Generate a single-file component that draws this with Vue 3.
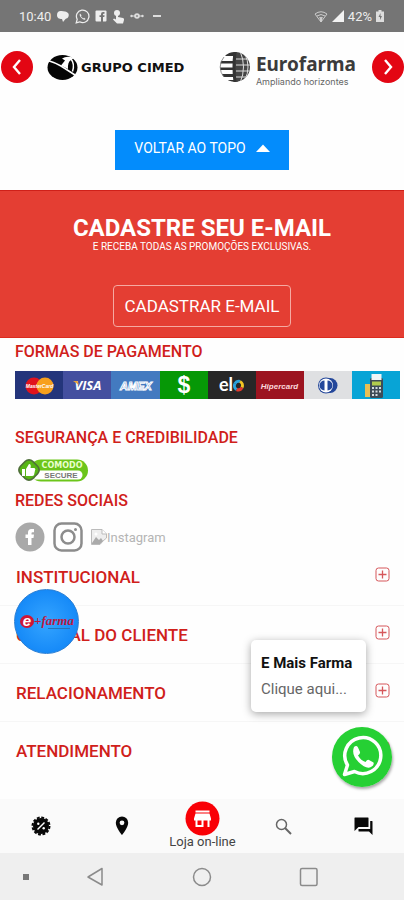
<script setup>
import { ref } from 'vue'

const sections = ['INSTITUCIONAL', 'CENTRAL DO CLIENTE', 'RELACIONAMENTO', 'ATENDIMENTO']
const open = ref('')
const toTop = () => window.scrollTo({ top: 0, behavior: 'smooth' })
</script>

<template>
  <div class="page">
    <header class="status">
      <div class="status-group">
        <span class="clock">10:40</span>
        <svg width="14" height="14" viewBox="0 0 14 14" fill="#eee"><path d="M1 6C1 3 3 1.500 5.500 2L9 2.500C12 3 13.500 5 12.500 7.500C12 9 10.500 9.500 9.500 10L7 13L6 10C3 10 1 9 1 6Z" /></svg>
        <svg width="15" height="15" viewBox="0 0 24 24" fill="none" stroke="#eee" stroke-width="2"><path d="M2 22l1.500-5.500A10 10 0 1 1 7.500 20.500Z" /><path d="M8 7c-1.500 2 0 5 2.500 7.500s5 3.500 6.500 1.500l-2.500-2-1.500 1-3.500-3.500 1-1.500Z" fill="#eee" stroke="none" /></svg>
        <svg width="12" height="12" viewBox="0 0 12 12"><rect x="0.500" y="0.500" width="11" height="11" rx="1" fill="#eee" /><path d="M6 12V7H4.500V5.200H6V4Q6 2 8 2H9.500V3.800H8.500Q8 3.800 8 4.300V5.200H9.600L9.300 7H8V12Z" fill="#757575" /></svg>
        <svg width="13" height="15" viewBox="0 0 13 15" fill="#eee"><circle cx="5" cy="4" r="3" /><path d="M4 4a1 1 0 0 1 2 0v4l5 1q1.500.500 1 2l-1 3.500H5L1 10.500l1-1 2 1Z" /></svg>
        <svg width="14" height="8" viewBox="0 0 14 8" fill="#ddd"><circle cx="7" cy="4" r="2.800" /><circle cx="1.500" cy="4" r="1.200" /><circle cx="12.500" cy="4" r="1.200" /><path d="M1 3.500h12v1H1Z" /><circle cx="7" cy="4" r="1" fill="#888" /></svg>
        <span class="dash"></span>
      </div>
      <div class="status-group right">
        <svg width="14" height="13" viewBox="0 0 14 13" fill="none" stroke="#ccc"><path d="M1 4Q7-.500 13 4L7 12Z" /><path d="M3 6q4-3 8 0M5 8q2-1.500 4 0" /><path d="M7 8v4" stroke-width="2" /></svg>
        <svg width="12" height="12" viewBox="0 0 12 12" fill="#f2f2f2"><path d="M12 0V12H0Z" /></svg>
        <span>42%</span>
        <svg width="8" height="12" viewBox="0 0 8 12"><path d="M2.500 0h3v1.500H8V12H0V1.500h2.500Z" fill="#ddd" /><path d="M4.500 3L2.500 7H4v3l2-4H4.500Z" fill="#757575" /></svg>
      </div>
    </header>

    <main>
      <section class="brands" aria-label="Marcas">
        <button class="arrow" aria-label="Anterior">
          <svg width="32" height="32" viewBox="0 0 32 32" fill="none" stroke="#fff" stroke-width="2.400"><path d="M19 9l-6 7 6 7" /></svg>
        </button>
        <div class="logos">
          <a class="cimed" href="#" aria-label="Grupo Cimed">
            <svg width="31" height="27" viewBox="0 0 31 27">
              <ellipse cx="15.500" cy="13.500" rx="15" ry="12.500" fill="#050505" />
              <path d="M1 6.500Q9 9 14 12L28 21" fill="none" stroke="#fff" stroke-width="1.600" />
              <path d="M14 11.500L18 6.500 15 4.500Q20 1.500 27 4L24 6Q20.500 8 21 15Z" fill="#fff" />
              <path d="M24 5q4 5 1.500 12.500" fill="none" stroke="#fff" stroke-width="1.500" />
            </svg>
            <span>GRUPO CIMED</span>
          </a>
          <a class="euro" href="#" aria-label="Eurofarma">
            <svg width="32" height="32" viewBox="0 0 32 32">
              <defs><clipPath id="globe"><circle cx="16" cy="16" r="15" /></clipPath></defs>
              <g clip-path="url(#globe)">
                <path d="M0 1h18v4H0ZM0 10h18v2.500H0ZM0 16.500h18v2.500H0ZM0 23h18v3H0ZM4 29h15v3H4Z" fill="#333" />
                <path d="M16 0h16v32H16Z" fill="#454545" />
                <path d="M17 8h15M17 14h15M17 20h15M17 26h15M21 0q7 16 0 32M26 3q6 13 0 26" fill="none" stroke="#ddd" stroke-width="1" />
                <path d="M16 1q-2 15 0 30" fill="none" stroke="#333" stroke-width="3" />
              </g>
              <path d="M5 6A15 15 0 0 0 5 26" fill="none" stroke="#777" stroke-width="0.800" />
            </svg>
            <span class="euro-words"><b>Eurofarma</b><small>Ampliando horizontes</small></span>
          </a>
        </div>
        <button class="arrow" aria-label="Próximo">
          <svg width="32" height="32" viewBox="0 0 32 32" fill="none" stroke="#fff" stroke-width="2.400"><path d="M13 9l6 7-6 7" /></svg>
        </button>
      </section>

      <button class="to-top" @click="toTop">
        <span>VOLTAR AO TOPO</span>
        <svg width="14" height="8" viewBox="0 0 14 8"><path d="M7 0.500L14 8H0Z" fill="#fff" /></svg>
      </button>

      <section class="newsletter">
        <h2>CADASTRE SEU E-MAIL</h2>
        <p>E RECEBA TODAS AS PROMOÇÕES EXCLUSIVAS.</p>
        <button>CADASTRAR E-MAIL</button>
      </section>

      <section class="info">
        <h3>FORMAS DE PAGAMENTO</h3>
        <svg class="cards" viewBox="0 0 385 28" role="img" aria-label="Formas de pagamento">
          <rect width="48" height="28" fill="#24357b" />
          <rect x="48" width="48" height="28" fill="#444f9f" />
          <rect x="96" width="49" height="28" fill="#437ac0" />
          <rect x="145" width="48" height="28" fill="#069806" />
          <rect x="193" width="48" height="28" fill="#272727" />
          <rect x="241" width="48" height="28" fill="#9c1420" />
          <rect x="289" width="48" height="28" fill="#dfe0e2" />
          <rect x="337" width="48" height="28" fill="#08a4d6" />
          <circle cx="19" cy="15" r="8.500" fill="#e1131d" /><circle cx="30" cy="15" r="8.500" fill="#f7a01d" />
          <text x="24.500" y="17" class="master">MasterCard</text>
          <text x="73" y="19" class="visa">VISA</text><path d="M58 10h4.500l1.500 4Z" fill="#e8a33d" />
          <text x="121" y="19" class="amex">AMEX</text>
          <text x="169" y="22" class="cash">$</text>
          <text x="211" y="20" class="elo">el</text>
          <g fill="none" stroke-width="3"><path d="M220 12.500a4.500 4.500 0 0 1 5-2" stroke="#2aa4df" /><path d="M225 10.500a4.500 4.500 0 0 1 2 6" stroke="#f3c623" /><path d="M227 16.500a4.500 4.500 0 0 1-5.500 2" stroke="#e33b2e" /><path d="M221.500 18.500a4.500 4.500 0 0 1-1.500-6" stroke="#2aa4df" /></g>
          <text x="264.500" y="18" class="hiper">Hipercard</text>
          <circle cx="315" cy="14.500" r="7.500" fill="#24479a" /><circle cx="311" cy="14.500" r="8" fill="#24479a" /><circle cx="311" cy="14.500" r="7" fill="#fff" /><path d="M309.500 9.500a5 5 0 0 0 0 10ZM312.500 9.500a5 5 0 0 1 0 10Z" fill="#24479a" />
          <rect x="350" y="13" width="10" height="13" fill="#e9bf54" /><rect x="355" y="7" width="13" height="20" rx="1.500" fill="#3e4b57" /><path d="M356.500 3h10v6h-10Z" fill="#eef4f6" /><rect x="357" y="10.500" width="9" height="4" fill="#b2cc4d" />
          <g fill="#d5dce1"><path d="M357 16h2v2h-2ZM360.500 16h2v2h-2ZM364 16h2v2h-2ZM357 19.500h2v2h-2ZM360.500 19.500h2v2h-2ZM364 19.500h2v2h-2ZM357 23h2v2h-2ZM360.500 23h2v2h-2Z" /></g>
        </svg>

        <h3 class="security">SEGURANÇA E CREDIBILIDADE</h3>
        <svg class="seal" width="72" height="25" viewBox="0 0 72 25" role="img" aria-label="Comodo Secure">
          <rect x="13" y="1.500" width="58" height="22" rx="11" fill="#6cc51a" />
          <path d="M19 12.500H61a4.500 4.500 0 0 1 0 9H17Z" fill="#fff" />
          <rect x="2.500" y="2.500" width="19" height="19" rx="6" transform="rotate(45 12 12)" fill="#4f6f3a" />
          <rect x="4" y="4" width="16" height="16" rx="5" transform="rotate(45 12 12)" fill="#57b516" />
          <path d="M5 11h3v7H5ZM9 11l3-5q2.500 0 1.500 4h4q1.500 1 .500 2.500l-1 4.500q-.500 1-2 1H9Z" fill="#fff" />
          <text x="45" y="10" class="comodo">COMODO</text>
          <text x="44" y="20" class="secure">SECURE</text>
        </svg>

        <h3 class="social-title">REDES SOCIAIS</h3>
        <div class="social">
          <a href="#" aria-label="Facebook"><svg width="30" height="30" viewBox="0 0 30 30"><circle cx="15" cy="15" r="14.500" fill="#a9a9a9" /><path d="M13 23V16H10.500V12.500H13V10.500Q13 7 16.500 7H19V10.300H17.500Q16.500 10.300 16.500 11.300V12.500H19L18.500 16H16.500V23Z" fill="#fff" /></svg></a>
          <a href="#" aria-label="Instagram"><svg width="30" height="30" viewBox="0 0 30 30" fill="none" stroke="#8c8c8c" stroke-width="2.500"><rect x="1.500" y="1.500" width="27" height="27" rx="7" /><circle cx="15" cy="15" r="6.500" /><circle cx="22.500" cy="7.500" r="1.500" fill="#8c8c8c" stroke="none" /></svg></a>
          <a href="#" class="missing">
            <svg width="16" height="16" viewBox="0 0 16 16"><path d="M.500.500H11L15.500 5V9L12 12 9 15.500H.500Z" fill="#eee" stroke="#bbb" /><path d="M11 .500V5h4.500" fill="#fff" stroke="#bbb" /><path d="M1 14l4-6 3 3 2-2 2 3-3 3H1Z" fill="#aaa" /><circle cx="5" cy="5" r="1.500" fill="#fff" /></svg><span>Instagram</span>
          </a>
        </div>
      </section>

      <nav class="sections" aria-label="Links do rodapé">
        <button v-for="name in sections" :key="name" :aria-expanded="open === name" @click="open = open === name ? '' : name">
          <span>{{ name }}</span>
          <svg width="15" height="15" viewBox="0 0 15 15" fill="none" stroke="#d6575b"><rect x="1" y="1" width="13" height="13" rx="2.500" /><path d="M3.500 7.500h8M7.500 3.500v8" stroke-width="1.300" /></svg>
        </button>
      </nav>
    </main>

    <footer>
      <nav class="tabs" aria-label="Principal">
        <a href="#" aria-label="Ofertas"><svg width="20" height="20" viewBox="0 0 20 20"><circle cx="10" cy="10" r="8" fill="#080808" /><circle cx="10" cy="10" r="8.500" fill="none" stroke="#080808" stroke-width="2" stroke-dasharray="2.850 1.600" /><path d="M6.500 13.500L13.500 6.500" stroke="#fff" stroke-width="1.400" /><circle cx="7.300" cy="7.700" r="1.200" fill="#fff" /><circle cx="12.700" cy="12.300" r="1.200" fill="#fff" /></svg></a>
        <a href="#" aria-label="Lojas"><svg width="14" height="20" viewBox="0 0 14 20"><path d="M7 .500a6.200 6.200 0 0 0-6.200 6.200C.800 11.500 7 19 7 19s6.200-7.500 6.200-12.300A6.200 6.200 0 0 0 7 .500Zm0 8.700a2.400 2.400 0 1 1 0-4.800 2.400 2.400 0 0 1 0 4.800Z" fill="#080808" /></svg></a>
        <a href="#" class="store">
          <svg width="35" height="35" viewBox="0 0 35 35"><circle cx="17.500" cy="17.500" r="17" fill="#f90006" /><path d="M10.500 9.500h14v2h-14ZM10.500 12.500h14l1.500 5v2h-1.500V26h-2v-6.500h-4V26h-8v-6.500H9v-2ZM12.500 19.500V24h4v-4.500Z" fill="#fff" fill-rule="evenodd" /></svg>
          <span>Loja on-line</span>
        </a>
        <a href="#" aria-label="Buscar"><svg width="17" height="17" viewBox="0 0 17 17" fill="none" stroke="#666"><circle cx="6.500" cy="6.500" r="5" stroke-width="1.500" /><path d="M10 10l6 6" stroke-width="2" /></svg></a>
        <a href="#" aria-label="Mensagens"><svg width="19" height="19" viewBox="0 0 19 19" fill="#080808"><path d="M.500 1q0-.500.500-.500h13q.500 0 .500.500v8.500q0 .500-.500.500H4.500l-4 4Z" /><path d="M16.200 4h1.800q.500 0 .500.500V18l-3.500-3.500H5q-.500 0-.500-.500v-2H16.200Z" /></svg></a>
      </nav>
      <div class="system">
        <span class="dot"></span>
        <button aria-label="Voltar"><svg width="18" height="20" viewBox="0 0 18 20" fill="none" stroke="#8b8b8b" stroke-width="1.500"><path d="M16 1.500V18L2 10Z" stroke-linejoin="round" /></svg></button>
        <button aria-label="Início"><svg width="20" height="20" viewBox="0 0 20 20" fill="none" stroke="#8b8b8b" stroke-width="1.500"><circle cx="10" cy="10" r="8.500" /></svg></button>
        <button aria-label="Recentes"><svg width="20" height="20" viewBox="0 0 20 20" fill="none" stroke="#8b8b8b" stroke-width="1.500"><rect x="1.500" y="1.500" width="16.500" height="17" rx="1.500" /></svg></button>
      </div>
    </footer>

    <a class="efarma" href="#" aria-label="e+farma">
      <svg width="58" height="20" viewBox="0 0 58 20">
        <ellipse cx="9" cy="9.500" rx="7" ry="6.500" fill="#cf1535" />
        <text x="9" y="14" class="e-mark">e</text>
        <text x="36" y="13" class="e-name">+farma</text>
        <path d="M30 16.500h22" stroke="#2a6fb5" stroke-width="1" />
      </svg>
    </a>
    <div class="popup"><b>E Mais Farma</b><span>Clique aqui...</span></div>
    <a class="whatsapp" href="#" aria-label="WhatsApp">
      <svg width="60" height="60" viewBox="0 0 60 60">
        <circle cx="30" cy="30" r="30" fill="#26d034" />
        <path d="M12.500 47.500L15.500 38A18 18 0 1 1 22.500 44.500Z" fill="none" stroke="#fff" stroke-width="3.500" stroke-linejoin="round" />
        <path d="M22 20q2.500-2 4 .500l2 4.500q.500 1.500-2 3.500 3 5 7.500 6.500 2-3 3.500-2l4.500 2.500q1 3-2.500 4.500Q34 42.500 26.500 35T22 20Z" fill="#fff" />
      </svg>
    </a>
  </div>
</template>

<style>
body { margin: 0; background: #fff; }
</style>

<style scoped>
* { box-sizing: border-box; }
.page { position: relative; min-height: 100vh; display: flex; flex-direction: column; font-family: Roboto, "Liberation Sans", sans-serif; background: #fefefe; }
button { font: inherit; border: 0; margin: 0; padding: 0; background: none; color: inherit; cursor: pointer; }
a { color: inherit; text-decoration: none; }
svg { display: block; flex: none; }
h2, h3, p { margin: 0; }
main { flex: 1; }

.status { height: 32px; padding: 0 20px 0 19px; display: flex; justify-content: space-between; align-items: center; background: #757575; color: #eee; font-size: 13px; }
.status-group { display: flex; align-items: center; gap: 5px; }
.status-group.right { gap: 4px; }
.dash { width: 8px; height: 2px; margin-left: 4px; background: #ddd; }

.brands { height: 72px; padding: 0 0 2px 1px; display: flex; align-items: center; }
.logos { flex: 1; padding: 0 16px 0 14px; display: flex; align-items: center; justify-content: space-between; }
.arrow { width: 32px; height: 32px; border-radius: 50%; background: #e30613; }
.cimed { display: flex; align-items: center; gap: 3px; color: #111; font: bold 13px "DejaVu Sans", sans-serif; }
.euro { height: 32px; display: flex; align-items: center; gap: 5px; color: #3b3b3b; }
.euro-words { display: flex; flex-direction: column; padding-top: 6px; }
.euro-words b { font: bold 19px/24px "Noto Sans", sans-serif; }
.euro-words small { font: 9px/12px Inter, sans-serif; color: #666; }

.to-top { display: flex; align-items: center; gap: 10px; height: 40px; margin: 26px auto 20px; padding: 0 19px 4px; background: #038cfc; color: #fff; font-size: 14px; }

.newsletter { height: 148px; padding-top: 24px; display: flex; flex-direction: column; align-items: center; background: #e43e33; border-top: 1px solid #cf2019; border-bottom: 1px solid #dc2b1e; color: #fff; }
.newsletter h2 { font-size: 24px; line-height: 26px; font-weight: 700; }
.newsletter p { font-size: 10px; line-height: 12px; font-weight: 400; }
.newsletter button { height: 42px; margin-top: 32px; padding: 0 11px; border: 1px solid #f5aaa2; border-radius: 4px; font-size: 17px; }

.info { padding: 4px 4px 0 15px; }
.info h3 { color: #d0201a; font-size: 16px; line-height: 20px; font-weight: 500; }
.cards { width: 100%; margin-top: 9px; }
.cards text, .seal text, .efarma text { text-anchor: middle; }
.master { font: bold italic 5px "Liberation Sans"; fill: #fff; }
.visa { font: italic bold 13px "Open Sans"; fill: #fff; }
.amex { font: italic bold 11px "Liberation Sans"; fill: #437ac0; stroke: #fff; stroke-width: 1px; }
.cash { font: bold 23px "Liberation Sans"; fill: #fff; }
.elo { font: bold 18px Lato; fill: #fff; }
.hiper { font: italic bold 8px "Liberation Sans"; fill: #fbd8dc; }
.info .security { margin-top: 29px; }
.seal { margin: 10px 0 0 2px; }
.comodo { font: bold 8px "DejaVu Sans"; fill: #e9ffce; }
.secure { font: bold 8px "Liberation Sans"; fill: #777; }
.info .social-title { margin-top: 8px; }
.social { display: flex; align-items: center; gap: 8px; margin-top: 11px; height: 30px; }
.missing { display: flex; align-items: center; color: #b5b5b5; font-size: 13px; }

.sections { display: flex; flex-direction: column; margin-top: -4px; }
.sections button { height: 58px; padding: 0 14px 0 16px; display: flex; align-items: center; justify-content: space-between; border-bottom: 1px solid #f6f6f6; color: #d0201a; font-size: 17px; font-weight: 500; }
.sections button:last-child { border-bottom: 0; }
.sections svg { margin-bottom: 5px; }

.tabs { display: grid; grid-template-columns: repeat(5, 1fr); height: 54px; padding-left: 1px; background: #fafafa; }
.tabs a { display: flex; flex-direction: column; align-items: center; justify-content: center; }
.tabs .store { color: #444; font-size: 13px; line-height: 12px; white-space: nowrap; padding-bottom: 3px; }
.system { height: 47px; display: grid; grid-template-columns: 42px 1fr 1fr 1fr; align-items: center; padding-right: 42px; background: #efefef; }
.system button { display: flex; justify-content: center; }
.dot { width: 6px; height: 6px; margin-left: 23px; background: #777; }

.efarma { position: absolute; left: 14px; top: 589px; width: 65px; height: 65px; border-radius: 50%; display: flex; align-items: center; justify-content: center; background: radial-gradient(circle, #35a5ff, #168af8 70%); border: 1px solid #2b7fd4; }
.e-mark { font: italic bold 15px "Liberation Sans"; fill: #fff; }
.e-name { font: italic bold 13px "Liberation Serif"; fill: #bd1842; }
.popup { position: absolute; right: 38px; bottom: 188px; width: 115px; height: 72px; padding: 0 10px; display: flex; flex-direction: column; justify-content: center; background: #fff; border-radius: 5px; box-shadow: 0 2px 8px rgba(0, 0, 0, 0.35); line-height: 26px; white-space: nowrap; }
.popup b { font-size: 15px; font-weight: 700; color: #111; }
.popup span { font-size: 15px; color: #666; }
.whatsapp { position: absolute; right: 12px; bottom: 113px; border-radius: 50%; box-shadow: 1px 2px 3px rgba(0, 0, 0, 0.35); }
</style>
